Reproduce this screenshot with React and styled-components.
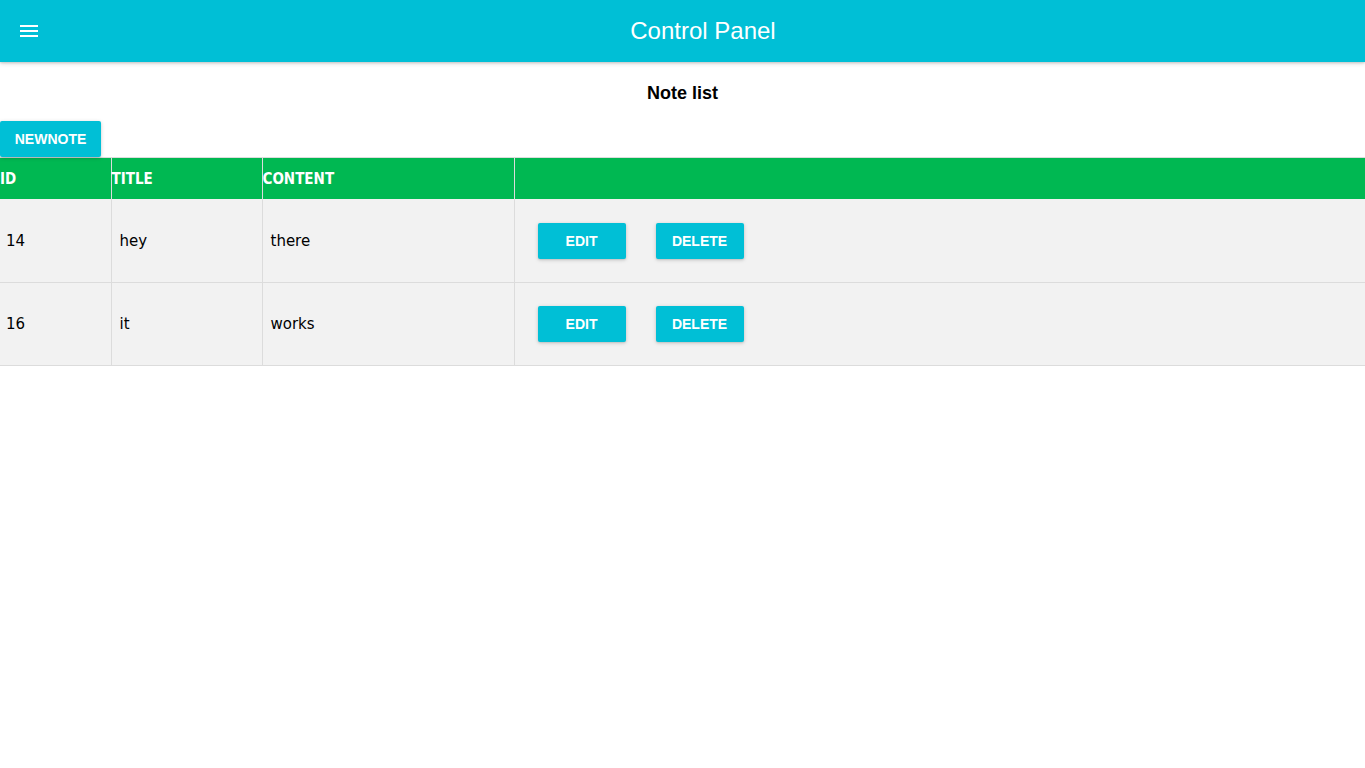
import React from "react";
import styled, { createGlobalStyle } from "styled-components";

const Global = createGlobalStyle`
  html, body { margin: 0; padding: 0; background: #fff; }
  body { font-family: "Liberation Sans", Arial, sans-serif; }
`;

const AppBar = styled.header`
  height: 62px;
  background: #00bfd6;
  display: flex;
  align-items: center;
  padding-left: 17px;
  box-shadow: 0 1px 5px rgba(0,0,0,0.18), 0 1px 2px rgba(0,0,0,0.12);
  position: relative;
  z-index: 1;
`;

const MenuButton = styled.button`
  background: none;
  border: 0;
  padding: 0;
  width: 24px;
  height: 24px;
  display: flex;
  color: #fff;
  cursor: pointer;
`;

const BarTitle = styled.h1`
  flex: 1;
  margin: 0;
  text-align: center;
  color: #fff;
  font-family: "Liberation Sans", Arial, sans-serif;
  font-weight: 400;
  font-size: 24px;
  line-height: 62px;
`;

const PageTitle = styled.h2`
  margin: 0;
  padding-top: 20px;
  height: 40px;
  box-sizing: border-box;
  text-align: center;
  font-size: 18px;
  font-weight: 700;
  line-height: 22px;
  color: #000;
`;

const Toolbar = styled.div`
  padding-top: 19px;
  display: flex;
`;

const Button = styled.button`
  border: 0;
  border-radius: 2px;
  background: #00bfd6;
  color: #fff;
  font-family: "Liberation Sans", Arial, sans-serif;
  font-weight: 700;
  font-size: 14px;
  height: 36px;
  width: ${(p) => p.$w || 88}px;
  padding: 0;
  text-transform: uppercase;
  cursor: pointer;
  box-shadow: 0 1px 4px rgba(0,0,0,0.16), 0 1px 2px rgba(0,0,0,0.1);
`;

const Table = styled.table`
  width: 100%;
  border-collapse: collapse;
  table-layout: fixed;
  font-family: "DejaVu Sans", Verdana, sans-serif;
`;

const Body = styled.tbody`
  border-top: 1px solid #f2f2f2;
`;

const HeadCell = styled.th`
  background: #00b852;
  color: #fff;
  height: 41px;
  padding: 0;
  text-align: left;
  font-family: "DejaVu Sans Condensed", "DejaVu Sans", sans-serif;
  font-weight: 700;
  font-size: 15px;
  border: 1px solid #dcdcdc;
  border-bottom: 0;
  &:first-child { border-left: 0; }
  &:last-child { border-right: 0; }
`;

const Row = styled.tr`
  background: #f2f2f2;
`;

const Cell = styled.td`
  height: 82px;
  padding: 0 0 0 ${(p) => (p.$actions ? 23 : 8)}px;
  font-size: 15px;
  color: #000;
  border: 1px solid #dcdcdc;
  border-top: 0;
  &:first-child { border-left: 0; padding-left: 6px; }
  &:last-child { border-right: 0; }
`;

const Actions = styled.div`
  display: flex;
  gap: 30px;
  align-items: center;
`;

const MenuIcon = () => (
  <svg width="24" height="24" viewBox="0 0 24 24" fill="currentColor">
    <path d="M3 18h18v-2H3v2zm0-5h18v-2H3v2zm0-7v2h18V6H3z" />
  </svg>
);

const notes = [
  { id: 14, title: "hey", content: "there" },
  { id: 16, title: "it", content: "works" },
];

export default function App() {
  return (
    <>
      <Global />
      <AppBar>
        <MenuButton aria-label="menu">
          <MenuIcon />
        </MenuButton>
        <BarTitle>Control Panel</BarTitle>
      </AppBar>
      <PageTitle>Note list</PageTitle>
      <Toolbar>
        <Button $w={101}>NewNote</Button>
      </Toolbar>
      <Table>
        <colgroup>
          <col style={{ width: 111 }} />
          <col style={{ width: 151 }} />
          <col style={{ width: 252 }} />
          <col />
        </colgroup>
        <thead>
          <tr>
            <HeadCell>ID</HeadCell>
            <HeadCell>TITLE</HeadCell>
            <HeadCell>CONTENT</HeadCell>
            <HeadCell />
          </tr>
        </thead>
        <Body>
          {notes.map((n) => (
            <Row key={n.id}>
              <Cell>{n.id}</Cell>
              <Cell>{n.title}</Cell>
              <Cell>{n.content}</Cell>
              <Cell $actions>
                <Actions>
                  <Button>Edit</Button>
                  <Button>Delete</Button>
                </Actions>
              </Cell>
            </Row>
          ))}
        </Body>
      </Table>
    </>
  );
}
